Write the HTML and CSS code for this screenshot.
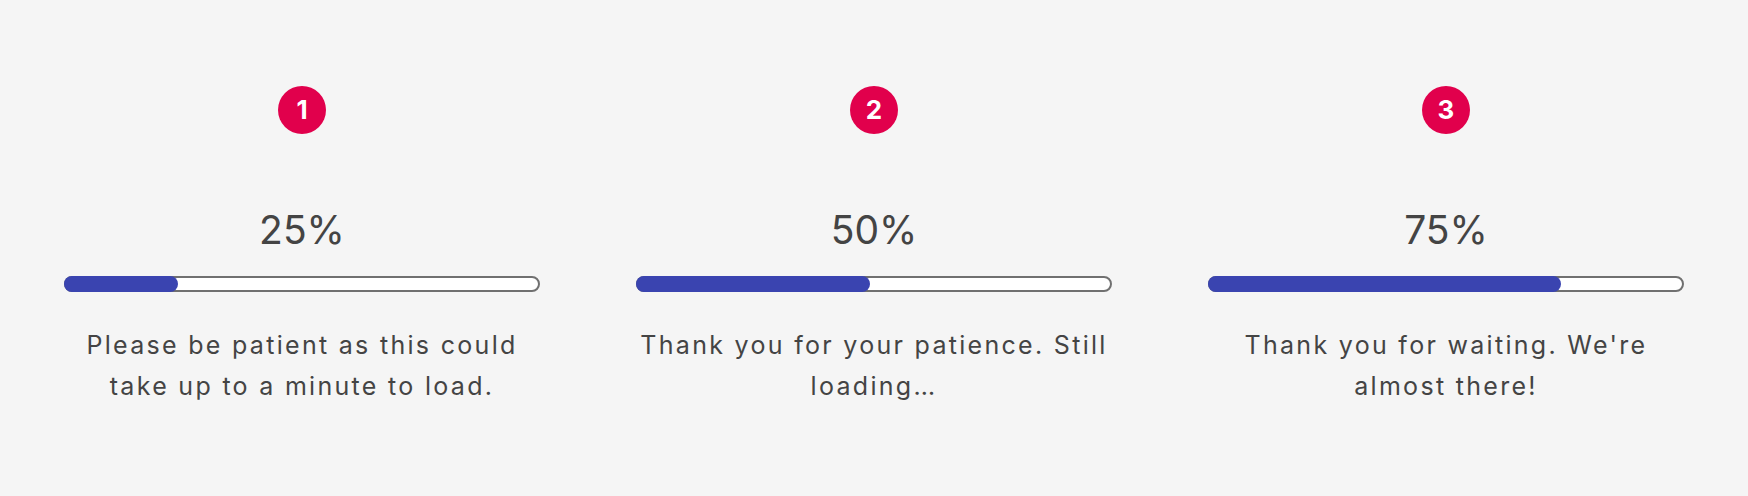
FILE: index.html
```html
<!DOCTYPE html>
<html lang="en">
<head>
<meta charset="utf-8">
<title>Loading progress</title>
<link rel="stylesheet" href="styles.css">
</head>
<body>
<main class="steps">
  <section class="step">
    <div class="badge">1</div>
    <div class="percent">25%</div>
    <div class="bar"><div class="fill" style="width:114px"></div></div>
    <p class="message">Please be patient as this could take up to a minute to load.</p>
  </section>
  <section class="step">
    <div class="badge">2</div>
    <div class="percent">50%</div>
    <div class="bar"><div class="fill" style="width:234px"></div></div>
    <p class="message">Thank you for your patience. Still loading…</p>
  </section>
  <section class="step">
    <div class="badge">3</div>
    <div class="percent">75%</div>
    <div class="bar"><div class="fill" style="width:353px"></div></div>
    <p class="message">Thank you for waiting. We're almost there!</p>
  </section>
</main>
</body>
</html>
```

FILE: styles.css
```css
html, body {
  margin: 0;
  padding: 0;
  background: #f5f5f5;
}
body {
  font-family: Inter, "Open Sans", "Liberation Sans", sans-serif;
  color: #444444;
}
.steps {
  display: grid;
  grid-template-columns: repeat(3, 1fr);
  column-gap: 96px;
  padding: 86px 64px 0;
}
.step {
  display: flex;
  flex-direction: column;
  align-items: center;
}
.badge {
  width: 48px;
  height: 48px;
  border-radius: 50%;
  background: #e1004c;
  color: #ffffff;
  font-weight: 700;
  font-size: 26px;
  display: flex;
  align-items: center;
  justify-content: center;
  line-height: 1;
}
.percent {
  margin-top: 72px;
  font-size: 39px;
  line-height: 48px;
  font-weight: 400;
  letter-spacing: 0;
}
.bar {
  margin-top: 22px;
  align-self: stretch;
  height: 16px;
  box-sizing: border-box;
  border: 2px solid #707070;
  border-radius: 8px;
  background: #ffffff;
  position: relative;
}
.fill {
  position: absolute;
  left: -2px;
  top: -2px;
  bottom: -2px;
  background: #3a44b0;
  border-radius: 8px;
}
.message {
  margin: 33px 0 0;
  font-size: 25px;
  line-height: 41px;
  text-align: center;
  letter-spacing: 2.3px;
}
```
